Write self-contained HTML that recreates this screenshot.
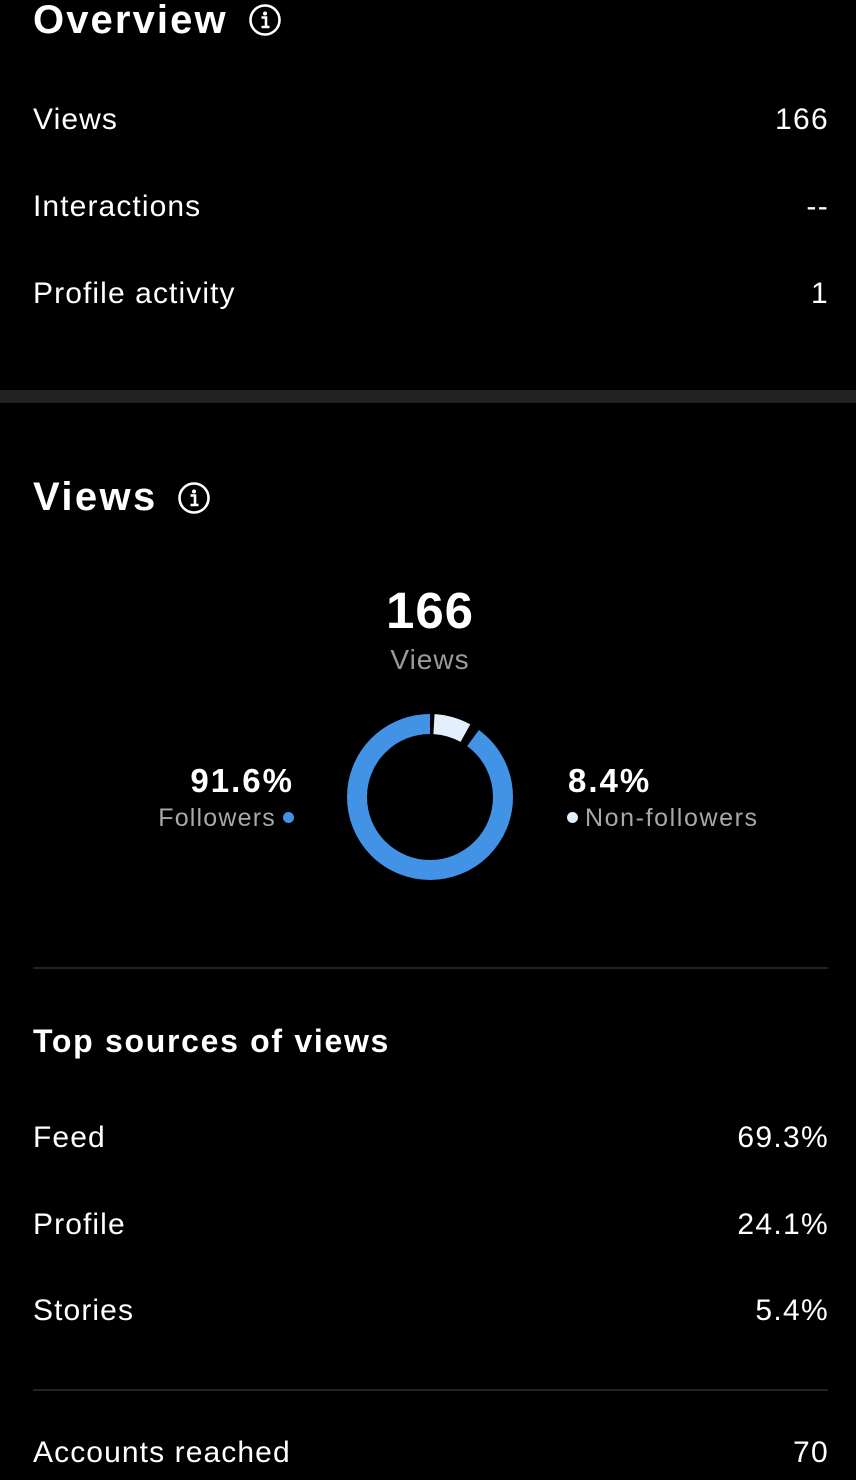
<!DOCTYPE html>
<html><head><meta charset="utf-8"><style>
body{margin:0;width:856px;height:1480px;background:#000;color:#fff;font-family:"Liberation Sans",sans-serif;position:relative;overflow:hidden}
.a{position:absolute;line-height:1;white-space:nowrap}
.l{left:33px;font-size:30px;letter-spacing:1.1px}
.r{right:27px;font-size:30px;text-align:right;letter-spacing:1.3px}
.h{left:33px;font-weight:bold}
.ln{position:absolute;left:33px;right:28px;height:2px;background:#222}
</style></head><body>
<div class="a h" style="top:0px;font-size:40px;letter-spacing:2.1px">Overview</div>
<svg class="a" style="left:248px;top:3px" width="34" height="34" viewBox="0 0 34 34"><circle cx="17" cy="17" r="14.5" fill="none" stroke="#fff" stroke-width="2.6"/><circle cx="17" cy="10.5" r="2" fill="#fff"/><path d="M13.5 14.5h4.5v9M13.5 24h8" stroke="#fff" stroke-width="2.6" fill="none"/></svg>
<div class="a l" style="top:105px">Views</div><div class="a r" style="top:105px">166</div>
<div class="a l" style="top:192px">Interactions</div><div class="a r" style="top:192px">--</div>
<div class="a l" style="top:279px">Profile activity</div><div class="a r" style="top:279px">1</div>
<div style="position:absolute;left:0;right:0;top:390px;height:13px;background:#222"></div>
<div class="a h" style="top:477px;font-size:40px;letter-spacing:2.4px">Views</div>
<svg class="a" style="left:177px;top:481px" width="34" height="34" viewBox="0 0 34 34"><circle cx="17" cy="17" r="14.5" fill="none" stroke="#fff" stroke-width="2.6"/><circle cx="17" cy="10.5" r="2" fill="#fff"/><path d="M13.5 14.5h4.5v9M13.5 24h8" stroke="#fff" stroke-width="2.6" fill="none"/></svg>
<div class="a" style="left:0;width:860px;text-align:center;top:585px;font-size:51px;font-weight:bold;letter-spacing:1px">166</div>
<div class="a" style="left:0;width:860px;text-align:center;top:646px;font-size:28px;color:#9a9a9a;letter-spacing:1px">Views</div>
<svg class="a" style="left:347px;top:714px" width="166" height="166" viewBox="0 0 166 166">
<g transform="rotate(-90 83 83)">
<circle cx="83" cy="83" r="73" fill="none" stroke="#4293e6" stroke-width="20" stroke-dasharray="413 46" stroke-dashoffset="-46"/>
<circle cx="83" cy="83" r="73" fill="none" stroke="#e3effa" stroke-width="20" stroke-dasharray="33 426" stroke-dashoffset="-4"/>
</g></svg>
<div class="a" style="right:562px;top:764px;font-size:33px;font-weight:bold;letter-spacing:2px">91.6%</div>
<div class="a" style="right:580px;top:806px;font-size:25px;color:#a8a8a8;letter-spacing:1.2px">Followers</div>
<div class="a" style="left:283px;top:812px;width:11px;height:11px;border-radius:50%;background:#4293e6"></div>
<div class="a" style="left:568px;top:764px;font-size:33px;font-weight:bold;letter-spacing:2px">8.4%</div>
<div class="a" style="left:567px;top:812px;width:11px;height:11px;border-radius:50%;background:#e3effa"></div>
<div class="a" style="left:585px;top:806px;font-size:25px;color:#a8a8a8;letter-spacing:1.6px">Non-followers</div>
<div class="ln" style="top:967px"></div>
<div class="a h" style="top:1025px;font-size:32px;letter-spacing:1.7px">Top sources of views</div>
<div class="a l" style="top:1123px">Feed</div><div class="a r" style="top:1123px">69.3%</div>
<div class="a l" style="top:1210px">Profile</div><div class="a r" style="top:1210px">24.1%</div>
<div class="a l" style="top:1296px">Stories</div><div class="a r" style="top:1296px">5.4%</div>
<div class="ln" style="top:1389px"></div>
<div class="a l" style="top:1438px">Accounts reached</div><div class="a r" style="top:1438px">70</div>
</body></html>
